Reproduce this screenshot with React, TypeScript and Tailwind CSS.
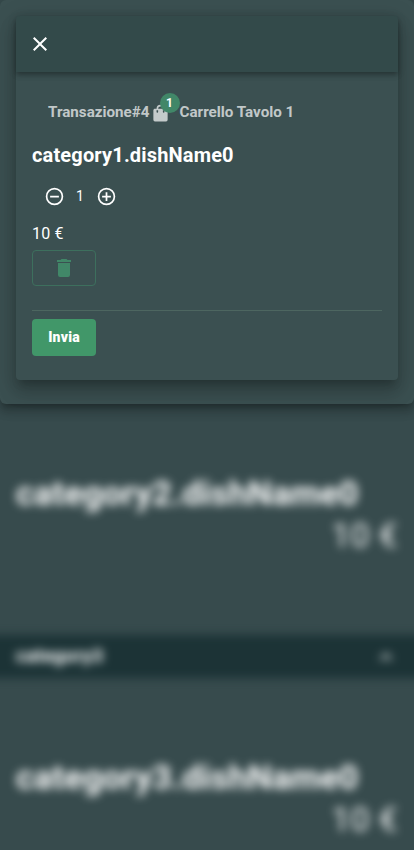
import type { ReactNode } from "react";

function Icon({ d, className }: { d: string; className: string }) {
  return (
    <svg viewBox="0 0 24 24" fill="currentColor" className={className} aria-hidden="true">
      <path d={d} />
    </svg>
  );
}

const icons = {
  close:
    "M19,6.41L17.59,5L12,10.59L6.41,5L5,6.41L10.59,12L5,17.59L6.41,19L12,13.41L17.59,19L19,17.59L13.41,12L19,6.41Z",
  minus:
    "M12,20C7.59,20 4,16.41 4,12C4,7.59 7.59,4 12,4C16.41,4 20,7.59 20,12C20,16.41 16.41,20 12,20M12,2A10,10 0 0,0 2,12A10,10 0 0,0 12,22A10,10 0 0,0 22,12A10,10 0 0,0 12,2M7,13H17V11H7",
  plus:
    "M12,20C7.59,20 4,16.41 4,12C4,7.59 7.59,4 12,4C16.41,4 20,7.59 20,12C20,16.41 16.41,20 12,20M12,2A10,10 0 0,0 2,12A10,10 0 0,0 12,22A10,10 0 0,0 22,12A10,10 0 0,0 12,2M13,7H11V11H7V13H11V17H13V13H17V11H13V7Z",
  trash:
    "M19,4H15.5L14.5,3H9.5L8.5,4H5V6H19M6,19A2,2 0 0,0 8,21H16A2,2 0 0,0 18,19V7H6V19Z",
  bag: "M12,1A5,5 0 0,0 7,6H5C3.89,6 3,6.9 3,8V20A2,2 0 0,0 5,22H19A2,2 0 0,0 21,20V8C21,6.89 20.1,6 19,6H17A5,5 0 0,0 12,1M12,3A3,3 0 0,1 15,6H9A3,3 0 0,1 12,3M7,8H9V10A1,1 0 0,1 7,10M15,8H17V10A1,1 0 0,1 15,10Z",
  chevron: "M7.41,15.41L12,10.83L16.59,15.41L18,14L12,8L6,14L7.41,15.41Z",
};

function Dish({ name }: { name: string }) {
  return (
    <div className="px-4 text-[34px] leading-[42px] tracking-[0.25px] text-white">
      <h2 className="font-bold">{name}</h2>
      <p className="text-right text-white/95">10 €</p>
    </div>
  );
}

function Category({ title, children }: { title: string; children: ReactNode }) {
  return (
    <section>
      <header className="-mx-4 flex h-[43px] items-center justify-between bg-[#1c3336] px-8">
        <h3 className="text-[19px] font-bold tracking-[0.15px] text-white">{title}</h3>
        <Icon d={icons.chevron} className="size-6 text-white" />
      </header>
      <div className="pt-[78px]">{children}</div>
    </section>
  );
}

export default function App() {
  return (
    <div className="relative h-[850px] w-[414px] overflow-hidden bg-[#374b4d] font-['Roboto',sans-serif]">
      <main className="-mx-4 px-4 pt-[472px] blur-[4.7px]">
        <Dish name="category2.dishName0" />
        <div className="pt-[79px]">
          <Category title="category3">
            <Dish name="category3.dishName0" />
          </Category>
        </div>
      </main>

      <div
        role="dialog"
        className="absolute inset-x-0 top-0 h-[404px] rounded-md bg-[#3b5051] p-4 shadow-[0_5px_5px_-3px_rgba(0,0,0,0.2),0_8px_10px_1px_rgba(0,0,0,0.14),0_3px_14px_2px_rgba(0,0,0,0.12)]"
      >
        <div className="h-[364px] rounded bg-[#3b5051] shadow-[0_7px_8px_-4px_rgba(0,0,0,0.2),0_12px_17px_2px_rgba(0,0,0,0.14),0_5px_22px_4px_rgba(0,0,0,0.12)]">
          <header className="flex h-14 items-center rounded-t bg-[#334a4a] px-3 shadow-[0_2px_4px_-1px_rgba(0,0,0,0.2),0_4px_5px_0_rgba(0,0,0,0.14),0_1px_10px_0_rgba(0,0,0,0.12)]">
            <button aria-label="Chiudi" className="text-white">
              <Icon d={icons.close} className="size-6" />
            </button>
          </header>

          <div className="px-4 text-white">
            <div className="flex h-20 items-center pl-4 text-[15.2px] font-bold text-white/70">
              <span>Transazione#4</span>
              <span className="relative ml-px flex">
                <Icon d={icons.bag} className="mt-0.5 size-[19px]" />
                <span className="absolute -top-[9px] left-[9px] flex size-5 items-center justify-center rounded-full bg-[#418768] text-[12px] text-white">
                  1
                </span>
              </span>
              <span className="ml-[10px]">Carrello Tavolo 1</span>
            </div>
            <h1 className="-mt-[13px] text-[20px] leading-8 font-bold tracking-[0.16px]">category1.dishName0</h1>
            <div className="mt-3 flex h-[26px] items-center pl-[11.5px]">
              <Icon d={icons.minus} className="size-[21px]" />
              <span className="w-[31px] text-center text-[14px] leading-[22px]">1</span>
              <Icon d={icons.plus} className="size-[21px]" />
            </div>
            <p className="mt-[13px] text-[16px] leading-6 tracking-[0.15px]">10 €</p>
            <button
              aria-label="Elimina"
              className="mt-1 flex h-9 w-16 items-center justify-center rounded border border-[#3d6f5d] text-[#418768]"
            >
              <Icon d={icons.trash} className="size-6" />
            </button>
            <hr className="mt-6 border-[#4d6660]" />
            <button className="mt-2 flex h-[37px] w-16 items-center justify-center rounded bg-[#419769] pb-px text-[14px] font-black tracking-[0.2px]">
              Invia
            </button>
          </div>
        </div>
      </div>
    </div>
  );
}
